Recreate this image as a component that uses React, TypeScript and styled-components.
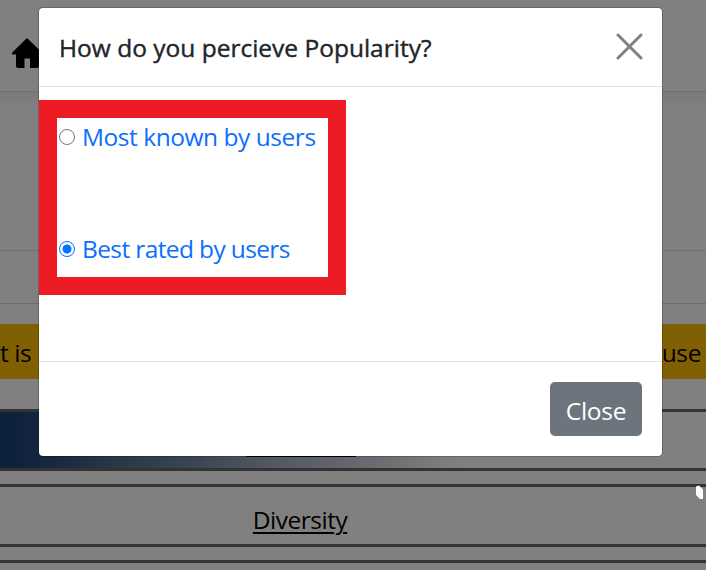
import React, { useState } from "react";
import styled, { createGlobalStyle } from "styled-components";

const GlobalStyle = createGlobalStyle`
  *, *::before, *::after { box-sizing: border-box; }
  html, body { margin: 0; padding: 0; overflow: hidden; }
  body {
    background: #808080;
    color: #000;
    font-family: "Open Sans", "Noto Sans", sans-serif;
    font-size: 24.5px;
    line-height: 36px;
  }
`;

const Page = styled.div`
  position: relative;
  width: 706px;
  height: 570px;
  overflow: hidden;
  display: flex;
  flex-direction: column;
`;

const Navbar = styled.header`
  flex: none;
  height: 92px;
  padding: 37px 0 0 11px;
  border-bottom: 1px solid #707070;
`;

const Hero = styled.div`
  flex: none;
  height: 159px;
  background: linear-gradient(#7a7a7a, #808080 16px);
  border-bottom: 1px solid #6c7074;
`;

const Tabs = styled.div`
  flex: none;
  height: 53px;
  border-bottom: 1px solid #6a6c6f;
`;

const Notice = styled.div`
  flex: none;
  display: flex;
  justify-content: space-between;
  align-items: center;
  height: 55px;
  margin: 20px 0 30px;
  padding: 2px 5px 0 0;
  background: #806002;
`;

const Criterion = styled.div<{ $height: number; $active?: boolean }>`
  flex: none;
  height: ${(p) => p.$height}px;
  margin-bottom: 13px;
  padding-top: 15px;
  padding-right: ${(p) => (p.$active ? 104 : 106)}px;
  border: solid #333;
  border-width: 3px 0;
  text-align: center;
  background: ${(p) =>
    p.$active
      ? "linear-gradient(90deg, #0b2039 0, #14253f 40px, #263747 110px, #3a4551 190px, #555962 280px, #66696e 360px, #808080 460px)"
      : "transparent"};
`;

const Label = styled.span<{ $spacing: number; $underline?: boolean; $medium?: boolean }>`
  letter-spacing: ${(p) => p.$spacing}px;
  -webkit-text-stroke: ${(p) => (p.$medium ? "0.4px currentColor" : "0")};
  white-space: nowrap;
  text-decoration: ${(p) => (p.$underline ? "underline" : "none")};
  text-decoration-thickness: 2px;
  text-underline-offset: 3px;
`;

const ActiveLabel = styled.span`
  display: inline-block;
  vertical-align: top;
  width: 110px;
  height: 30px;
  border-bottom: 2px solid #000;
  letter-spacing: -1px;
  line-height: 24px;
  white-space: nowrap;
`;

const Overlay = styled.div`
  position: absolute;
  inset: 0;
  padding: 7px 0 0 38px;
`;

const Dialog = styled.section`
  display: flex;
  flex-direction: column;
  width: 625px;
  height: 450px;
  background: #fff;
  background-clip: padding-box;
  border: 1px solid rgba(0, 0, 0, 0.2);
  border-radius: 5px;
`;

const DialogHeader = styled.div`
  display: flex;
  justify-content: space-between;
  flex: none;
  height: 79px;
  padding: 22px 19px 0 20px;
  border-bottom: 1px solid #dee2e6;
`;

const Title = styled.h1`
  margin: 0;
  font-size: 24.5px;
  font-weight: 400;
  color: #212529;
`;

const IconButton = styled.button`
  display: flex;
  width: 27px;
  height: 27px;
  margin-top: 3px;
  padding: 0;
  border: 0;
  background: none;
`;

const DialogBody = styled.div`
  flex: 1;
  padding-top: 13px;
`;

const Highlight = styled.div`
  display: flex;
  flex-direction: column;
  gap: 76px;
  width: 307px;
  height: 195px;
  padding: 1px 2px 0;
  border: 18px solid #ed1c24;
`;

const Option = styled.label`
  display: flex;
  align-items: center;
  gap: 7px;
  height: 36px;
  color: #0d6efd;
`;

const Radio = styled.input`
  appearance: none;
  flex: none;
  width: 16px;
  height: 16px;
  margin: 0;
  border: 1px solid #767676;
  border-radius: 50%;
  &:checked {
    border-color: #0075ff;
    background: radial-gradient(circle, #0075ff 4.1px, #fff 4.9px);
  }
`;

const DialogFooter = styled.div`
  display: flex;
  justify-content: flex-end;
  flex: none;
  height: 95px;
  padding: 20px 20px 0 0;
  border-top: 1px solid #dee2e6;
`;

const CloseButton = styled.button`
  width: 92px;
  height: 54px;
  padding: 4px 0 0;
  border: 0;
  border-radius: 5px;
  background: #6c757d;
  color: #fff;
  font: inherit;
`;

const Cursor = styled.svg`
  position: absolute;
  left: 696px;
  top: 485px;
`;

const options = [
  { id: "known", text: "Most known by users", spacing: -0.46 },
  { id: "rated", text: "Best rated by users", spacing: -0.62 },
];

export default function App() {
  const [choice, setChoice] = useState("rated");
  return (
    <>
      <GlobalStyle />
      <Page>
        <Navbar>
          <svg width="32" height="32" viewBox="0 0 32 32" aria-label="Home">
            <path d="M16 1 31 15.5Q32 17 30 17.5H28V29Q28 31 26 31H19V21.5H13.5V31H7Q5 31 5 29V17.5H2Q0 17 1.5 15.2Z" />
          </svg>
        </Navbar>
        <Hero />
        <Tabs />
        <Notice>
          <Label $spacing={-0.4}>t is</Label>
          <Label $spacing={-0.4}>use</Label>
        </Notice>
        <Criterion $height={62} $active>
          <ActiveLabel>Popularity</ActiveLabel>
        </Criterion>
        <Criterion $height={63}>
          <Label $spacing={-0.5} $underline>Diversity</Label>
        </Criterion>
        <Criterion $height={63} />
        <Cursor width="8" height="15" viewBox="0 0 8 15">
          <path d="M0 1.5 3 0.5 7 4.5V14H4L0 10Z" fill="#fff" />
        </Cursor>
        <Overlay>
          <Dialog role="dialog">
            <DialogHeader>
              <Title>
                <Label $spacing={0} $medium>How do you percieve Popularity?</Label>
              </Title>
              <IconButton aria-label="Close">
                <svg width="27" height="27" viewBox="0 0 27 27">
                  <path d="M2 2 25 25M25 2 2 25" fill="none" stroke="#808080" strokeWidth="3" strokeLinecap="round" />
                </svg>
              </IconButton>
            </DialogHeader>
            <DialogBody>
              <Highlight>
                {options.map((o) => (
                  <Option key={o.id}>
                    <Radio type="radio" name="popularity" checked={choice === o.id} onChange={() => setChoice(o.id)} />
                    <Label $spacing={o.spacing}>{o.text}</Label>
                  </Option>
                ))}
              </Highlight>
            </DialogBody>
            <DialogFooter>
              <CloseButton>
                <Label $spacing={-0.3}>Close</Label>
              </CloseButton>
            </DialogFooter>
          </Dialog>
        </Overlay>
      </Page>
    </>
  );
}
